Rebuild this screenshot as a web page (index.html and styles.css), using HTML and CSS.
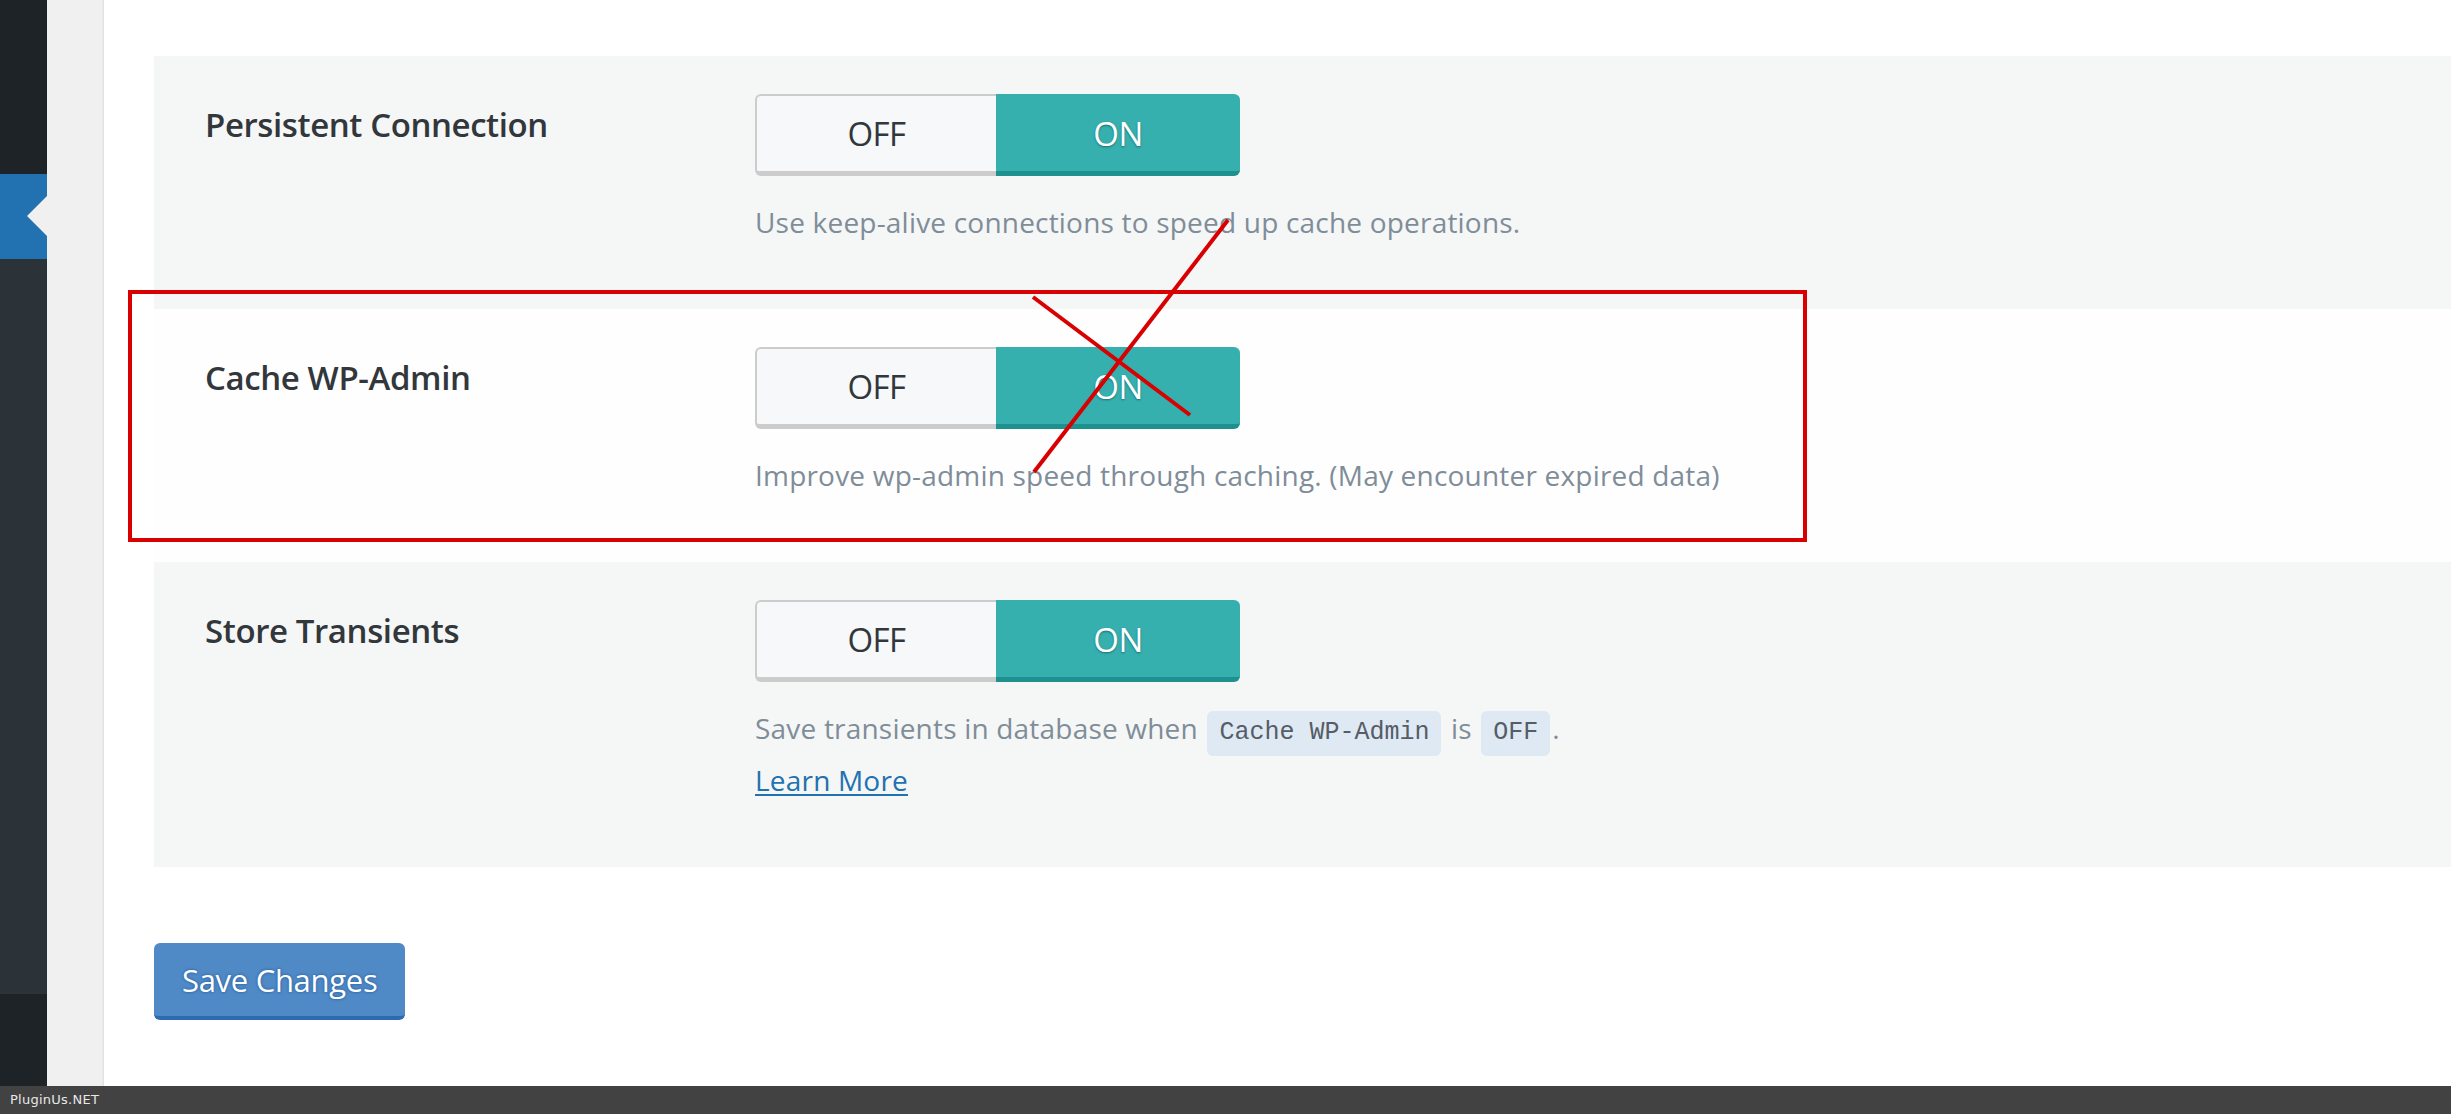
FILE: index.html
```html
<!DOCTYPE html>
<html lang="en">
<head>
<meta charset="utf-8">
<title>Settings</title>
<link rel="stylesheet" href="styles.css">
</head>
<body>
<div class="screen">
  <aside class="adminmenu">
    <div class="menu-top"></div>
    <div class="menu-current"></div>
    <div class="menu-rest"></div>
    <div class="menu-foot"></div>
  </aside>
  <div class="gutter"></div>
  <main class="content">
    <div class="settings">
      <div class="row alt">
        <div class="label">Persistent Connection</div>
        <div class="field">
          <div class="toggle"><span class="opt off">OFF</span><span class="opt on">ON</span></div>
          <p class="desc">Use keep-alive connections to speed up cache operations.</p>
        </div>
      </div>
      <div class="row">
        <div class="label">Cache WP-Admin</div>
        <div class="field">
          <div class="toggle"><span class="opt off">OFF</span><span class="opt on">ON</span></div>
          <p class="desc">Improve wp-admin speed through caching. (May encounter expired data)</p>
        </div>
      </div>
      <div class="row alt">
        <div class="label">Store Transients</div>
        <div class="field">
          <div class="toggle"><span class="opt off">OFF</span><span class="opt on">ON</span></div>
          <p class="desc">Save transients in database when <code>Cache WP-Admin</code> is <code>OFF</code>.</p>
          <p class="desc more"><a href="#">Learn More</a></p>
        </div>
      </div>
    </div>
    <button class="save" type="button">Save Changes</button>
  </main>
</div>
<footer class="watermark">PluginUs.NET</footer>
<div class="annot-box"></div>
<svg class="annot-x" width="2451" height="1114" viewBox="0 0 2451 1114">
  <line x1="1033" y1="297" x2="1190" y2="415"/>
  <line x1="1228" y1="220" x2="1034" y2="472"/>
</svg>
</body>
</html>
```
FILE: styles.css
```css
* { box-sizing: border-box; }
html, body { margin: 0; padding: 0; }
body {
  width: 2451px;
  height: 1114px;
  overflow: hidden;
  position: relative;
  background: #fff;
  font-family: "Open Sans", "Noto Sans", sans-serif;
}
.screen {
  display: flex;
  height: 1086px;
}
.adminmenu {
  width: 47px;
  display: flex;
  flex-direction: column;
  flex-shrink: 0;
}
.menu-top { height: 174px; background: #1d2327; }
.menu-current { height: 85px; background: #2271b1; position: relative; }
.menu-current::after {
  content: "";
  position: absolute;
  right: 0;
  top: 22px;
  border-style: solid;
  border-width: 20px 20px 20px 0;
  border-color: transparent #f0f0f0 transparent transparent;
}
.menu-rest { flex: 1; background: #2c3338; }
.menu-foot { height: 92px; background: #1d2327; }
.gutter {
  width: 57px;
  flex-shrink: 0;
  background: #f0f0f0;
  box-shadow: inset -2px 0 2px -1px #dcdcdc;
}
.content {
  flex: 1;
  padding: 56px 0 0 50px;
  background: #fff;
}
.row {
  display: grid;
  grid-template-columns: 601px 1fr;
  padding: 38px 0 66px;
  background: #fefefe;
}
.row.alt { background: #f5f6f6; }
.label {
  padding: 11px 0 0 51px;
  font-size: 33px;
  line-height: 40px;
  font-weight: 600;
  letter-spacing: -0.4px;
  color: #32373c;
}
.toggle {
  display: flex;
  width: 485px;
  height: 82px;
}
.opt {
  display: flex;
  align-items: center;
  justify-content: center;
  font-size: 33px;
  letter-spacing: -0.5px;
}
.off {
  flex: 0 0 241px;
  background: #f7f8fa;
  color: #32373c;
  border: 2px solid #cccccc;
  border-right: 0;
  border-bottom-width: 5px;
  border-radius: 6px 0 0 6px;
}
.on {
  flex: 1;
  background: #36afaf;
  color: #fff;
  border-top: 2px solid #36afaf;
  border-bottom: 5px solid #1e918e;
  border-radius: 0 6px 6px 0;
  text-shadow: 0 1px 2px rgba(0, 60, 60, 0.55);
}
.desc {
  margin: 25px 0 0;
  font-size: 28px;
  line-height: 42px;
  color: #7f8d99;
  letter-spacing: 0.2px;
}
.desc.more { margin-top: 5px; }
.desc code {
  font-family: "Liberation Mono", "DejaVu Sans Mono", monospace;
  font-size: 25px;
  letter-spacing: 0;
  color: #555d66;
  background: #dfe9f3;
  border-radius: 6px;
  padding: 7px 12px 9px;
  margin: 0 2px;
}
.desc a {
  color: #2271b1;
  text-decoration: underline;
  text-underline-offset: 3px;
}
.save {
  display: block;
  margin-top: 76px;
  height: 77px;
  padding: 0 28px;
  font-family: "Open Sans", "Noto Sans", sans-serif;
  font-size: 31px;
  letter-spacing: -0.3px;
  color: #fff;
  background: #4f89c6;
  border: 0;
  border-bottom: 4px solid #2d6bb0;
  border-radius: 6px;
  text-shadow: 0 0 3px #1f5596;
}
.watermark {
  position: absolute;
  left: 0;
  bottom: 0;
  width: 100%;
  height: 28px;
  padding-left: 10px;
  background: #424242;
  color: #e8e8e8;
  font-family: "DejaVu Sans", sans-serif;
  font-size: 13px;
  letter-spacing: 0.25px;
  line-height: 28px;
}
.annot-box {
  position: absolute;
  left: 128px;
  top: 290px;
  width: 1679px;
  height: 252px;
  border: 4px solid #d80000;
  pointer-events: none;
}
.annot-x {
  position: absolute;
  left: 0;
  top: 0;
  pointer-events: none;
}
.annot-x line {
  stroke: #d80000;
  stroke-width: 4;
}
```
